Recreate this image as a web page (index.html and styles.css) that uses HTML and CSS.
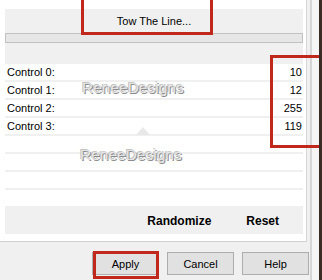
FILE: index.html
```html
<!DOCTYPE html>
<html lang="en">
<head>
  <meta charset="UTF-8" />
  <title>Tow The Line</title>
  <link rel="stylesheet" href="styles.css">
</head>
<body>
  <div class="window">
    <div class="main">
      <!-- Filter panel -->
      <div class="panel">
        <div class="head">
          <div class="title">Tow The Line...</div>
          <div class="progress"></div>
        </div>
        <ul class="controls">
          <li><span>Control 0:</span><span>10</span></li>
          <li><span>Control 1:</span><span>12</span></li>
          <li><span>Control 2:</span><span>255</span></li>
          <li><span>Control 3:</span><span>119</span></li>
          <li></li>
          <li></li>
          <li></li>
          <li></li>
        </ul>
        <div class="actions">
          <span>Randomize</span>
          <span>Reset</span>
        </div>
      </div>

      <!-- Dialog buttons -->
      <div class="buttons">
        <button class="btn">Apply</button>
        <button class="btn">Cancel</button>
        <button class="btn">Help</button>
      </div>
    </div>
    <div class="rail"></div>
    <div class="edge"></div>

    <!-- Overlays -->
    <div class="mark mark-top">ReneeDesigns</div>
    <div class="mark mark-bottom">ReneeDesigns</div>
    <div class="notch"></div>
    <div class="callout callout-title"></div>
    <div class="callout callout-values"></div>
    <div class="callout callout-apply"></div>
  </div>
</body>
</html>
```

FILE: styles.css
```css
* { box-sizing: border-box; }
body {
  margin: 0;
  background: #f0f0f0;
  font-family: 'Liberation Sans', Arial, sans-serif;
  font-size: 11px;
  color: #000;
}
.window {
  position: relative;
  display: flex;
  width: 322px;
  height: 280px;
  overflow: hidden;
}
.main {
  width: 310px;
  display: flex;
  flex-direction: column;
}
.panel {
  width: 307px;
  height: 242px;
  background: white;
  padding: 9px 3px 0 5px;
  border-right: 1px solid #d8d8d8;
  border-bottom: 1px solid #d0d0d0;
}
.head {
  height: 55px;
  background: #f0f0f0;
}
.title {
  height: 24px;
  line-height: 24px;
  text-align: center;
}
.progress {
  height: 10px;
  border: 1px solid #c2c2c2;
  background: #e6e6e6;
}
.controls {
  list-style: none;
  margin: 0;
  padding: 0;
}
.controls li {
  height: 18px;
  border-bottom: 2px solid #f0f0f0;
  display: flex;
  justify-content: space-between;
  align-items: center;
  padding: 0 1px 0 2px;
  line-height: 16px;
}
.actions {
  height: 26px;
  background: #f0f0f0;
  display: flex;
  justify-content: flex-end;
  align-items: center;
  gap: 35px;
  padding-right: 24px;
  font-size: 12px;
  font-weight: bold;
}
.buttons {
  display: flex;
  gap: 8px;
  padding: 10px 0 0 92px;
}
.btn {
  width: 67px;
  height: 23px;
  padding: 0;
  border: 1px solid #adadad;
  background: #e1e1e1;
  font-family: inherit;
  font-size: 11px;
  color: #000;
}
.rail {
  width: 9px;
  border-left: 2px solid #d6d6d6;
  background: #f5f5f5;
}
.edge {
  position: relative;
  z-index: 2;
  width: 3px;
  background: #3b2b25;
}
.mark {
  position: absolute;
  font-size: 15.5px;
  line-height: 20px;
  color: #e4e4e4;
  text-shadow: 1px 1px 0 #8c8c8c, -1px -1px 0 #c4c4c4;
}
.mark-top { left: 82px; top: 78px; }
.mark-bottom { left: 80px; top: 145px; }
.notch {
  position: absolute;
  left: 136px;
  top: 127px;
  border-left: 7px solid transparent;
  border-right: 7px solid transparent;
  border-bottom: 8px solid #e8e8e8;
}
.callout {
  position: absolute;
  border: 3px solid #c0281c;
}
.callout-title { left: 81px; top: -3px; width: 132px; height: 38px; }
.callout-values { left: 270px; top: 55px; width: 52px; height: 93px; }
.callout-apply { left: 93px; top: 251px; width: 66px; height: 28px; }
```
